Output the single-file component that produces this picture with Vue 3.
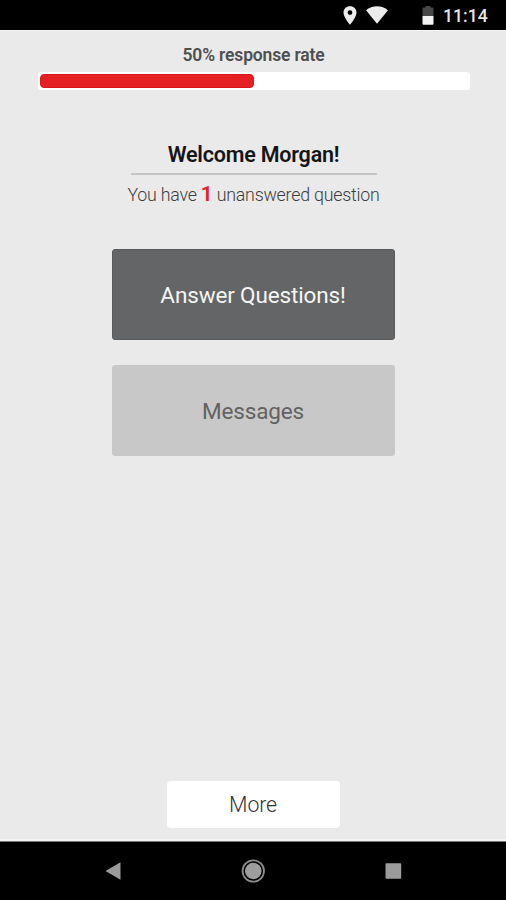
<script setup>
const name = 'Morgan'
const unanswered = 1
const rate = 50
const barWidth = `${rate}%`
</script>

<template>
  <div class="screen">
    <header class="status">
      <svg class="pin" width="14" height="20" viewBox="0 0 14 20">
        <path fill="#ececec" fill-rule="evenodd" d="M7 .2C3.300.2.500 2.900.500 6.500.500 11.200 7 18.800 7 18.800S13.500 11.200 13.500 6.500C13.500 2.900 10.700.2 7 .2ZM7 4.200A2.400 2.400 0 1 1 7 9A2.400 2.400 0 0 1 7 4.200Z" />
      </svg>
      <svg class="wifi" width="22" height="18" viewBox="0 0 22 18">
        <path fill="#ececec" d="M0 4.200C6-1.100 16-1.100 22 4.200L11 17.800Z" />
      </svg>
      <svg class="battery" width="12" height="19" viewBox="0 0 12 19">
        <path fill="#484848" d="M3.500 0h5v1.500H10.500a1 1 0 0 1 1 1V10H.5V2.500a1 1 0 0 1 1-1h2Z" />
        <path fill="#f4f4f4" d="M.5 10h11v7.800a1 1 0 0 1-1 1h-9a1 1 0 0 1-1-1Z" />
      </svg>
      <span class="clock">11:14</span>
    </header>

    <main class="content">
      <div class="rate">{{ rate }}% response rate</div>
      <div class="track"><div class="fill" :style="{ width: barWidth }"></div></div>

      <h1 class="welcome"><span>Welcome {{ name }}!</span></h1>
      <p class="summary"><span>You have <b>{{ unanswered }}</b> unanswered question</span></p>

      <button class="btn primary">Answer Questions!</button>
      <button class="btn secondary">Messages</button>
      <button class="btn more">More</button>
    </main>

    <nav class="nav">
      <svg width="24" height="24" viewBox="0 0 24 24"><path fill="#9b9b9b" d="M4.500 12 19.500 3.300V20.700Z" /></svg>
      <svg width="24" height="24" viewBox="0 0 24 24">
        <circle cx="12.300" cy="12" r="10.700" fill="none" stroke="#8c8c8c" stroke-width="1.800" />
        <circle cx="12.300" cy="12" r="8.300" fill="#9e9e9e" />
      </svg>
      <svg width="24" height="24" viewBox="0 0 24 24"><rect x="4.500" y="4.300" width="15.700" height="15.500" rx=".8" fill="#9b9b9b" /></svg>
    </nav>
  </div>
</template>

<style>
body {
  margin: 0;
}
</style>

<style scoped>
.screen {
  width: 506px;
  height: 900px;
  display: flex;
  flex-direction: column;
  background: #eaeaea;
  font-family: Roboto, "Liberation Sans", sans-serif;
  overflow: hidden;
}
.status {
  box-sizing: border-box;
  height: 30px;
  flex: none;
  display: flex;
  align-items: flex-start;
  background: #000;
  padding: 6px 0 0 343px;
}
.wifi {
  margin-left: 9px;
}
.battery {
  margin-left: 34px;
}
.clock {
  margin-left: 9px;
  color: #e6e6e6;
  font-size: 17.600px;
  font-weight: 500;
  line-height: 21px;
}
.content {
  flex: 1;
  display: flex;
  flex-direction: column;
  align-items: center;
  border-top: 1px solid #f4f4f4;
  border-bottom: 2px solid #f3f3f3;
}
.rate {
  margin: 14px 0 0 1px;
  color: #4f4f4f;
  font-size: 17.500px;
  font-weight: 600;
  letter-spacing: -0.17px;
  line-height: 20px;
  white-space: nowrap;
}
.track {
  box-sizing: border-box;
  width: 432px;
  height: 18px;
  margin: 7px 0 0 2px;
  padding: 2px 3px 2px 2px;
  border-radius: 3px;
  background: #fff;
}
.fill {
  box-sizing: border-box;
  height: 14px;
  border: 1px solid #d91519;
  border-radius: 4px;
  background: #e42022;
}
.welcome {
  box-sizing: border-box;
  width: 246px;
  height: 33px;
  margin: 52px 0 0 1px;
  border-bottom: 2px solid #c5c5c5;
  color: #151515;
  font-size: 21.500px;
  font-weight: 600;
  letter-spacing: -0.2px;
  line-height: 26px;
  display: flex;
  justify-content: center;
  white-space: nowrap;
}
.summary {
  margin: 8px 0 0 1px;
  color: #3c3c3c;
  font-size: 17.800px;
  font-weight: 350;
  letter-spacing: -0.22px;
  line-height: 24px;
  white-space: nowrap;
}
.summary b {
  color: #e42022;
  font-size: 21px;
  font-weight: 600;
  line-height: 20px;
}
.btn {
  box-sizing: border-box;
  width: 283px;
  height: 91px;
  padding: 0;
  border: 0;
  border-radius: 3px;
  font-family: inherit;
  font-size: 22.500px;
  letter-spacing: -0.14px;
  line-height: 28px;
  flex: none;
}
.primary {
  margin-top: 42px;
  border: 1px solid #595a5b;
  background: #646566;
  color: #f5f5f5;
}
.secondary {
  margin-top: 25px;
  background: #c8c8c8;
  color: #626262;
}
.more {
  width: 173px;
  height: 47px;
  margin: auto 0 11px;
  border-radius: 4px;
  background: #fff;
  color: #333;
  font-size: 21.300px;
  font-weight: 300;
}
.nav {
  box-sizing: border-box;
  height: 59px;
  flex: none;
  display: flex;
  justify-content: space-between;
  align-items: center;
  padding: 0 101px;
  border-top: 1px solid #777;
  background: #000;
}
</style>
